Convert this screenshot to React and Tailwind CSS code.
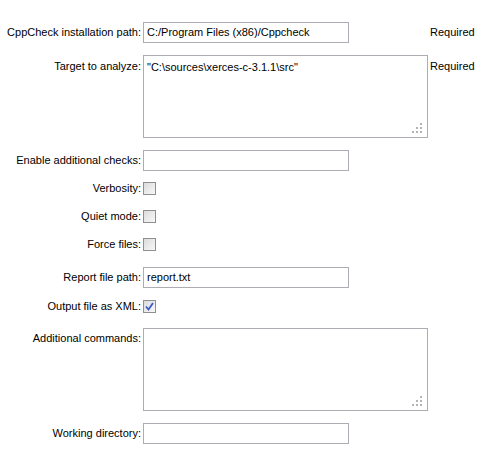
import React from "react";

/* ===================== Small parts ===================== */
function Grip() {
  // resize grip drawn in the textarea corner
  const dots = [
    [8, 0],
    [4, 4],
    [8, 4],
    [0, 8],
    [4, 8],
    [8, 8],
  ];
  return (
    <svg
      className="absolute right-[5px] bottom-[4px]"
      width="10"
      height="10"
      viewBox="0 0 10 10"
    >
      {dots.map(([x, y], i) => (
        <rect key={i} x={x} y={y} width="2" height="2" fill="#b4b4b4" />
      ))}
    </svg>
  );
}

function TextBox({ value = "" }) {
  return (
    <div className="w-[206px] h-[21px] border border-[#abadb3] bg-white px-[3px] flex items-center text-[11px] leading-none text-black">
      {value}
    </div>
  );
}

function TextArea({ value = "" }) {
  return (
    <div className="relative w-[285px] h-[83px] border border-[#abadb3] bg-white px-[3px] pt-[5px] text-[11px] leading-[13px] text-black">
      {value}
      <Grip />
    </div>
  );
}

function CheckBox({ checked }) {
  return (
    <div className="w-[13px] h-[13px] border border-[#8e8f8f] bg-gradient-to-br from-[#dcdcdc] to-[#f8f8f8] flex items-center justify-center">
      {checked && (
        <svg width="9" height="9" viewBox="0 0 9 9">
          <path
            d="M1 4.5 L3.5 7.5 L8 1"
            fill="none"
            stroke="#3a5cc6"
            strokeWidth="1.8"
          />
        </svg>
      )}
    </div>
  );
}

function Row({ label, children, note, top, className = "" }) {
  return (
    <div className={`flex ${top ? "items-start" : "items-center"} ${className}`}>
      <div
        className={`w-[143px] shrink-0 text-right pr-[2px] ${
          top || ""
        } text-[11px] leading-[13px] text-black`}
      >
        {label}
      </div>
      <div className="w-[287px] shrink-0">{children}</div>
      {note && (
        <div className={`text-[11px] leading-[13px] text-black ${top || ""}`}>
          {note}
        </div>
      )}
    </div>
  );
}

/* ===================== Component ===================== */
export default function App() {
  return (
    <div
      className="w-[481px] h-[463px] bg-white pt-[22px]"
      style={{ fontFamily: '"Liberation Sans", Arial, sans-serif' }}
    >
      <Row label="CppCheck installation path:" note="Required">
        <TextBox value="C:/Program Files (x86)/Cppcheck" />
      </Row>

      <Row
        label="Target to analyze:"
        note="Required"
        top="pt-[5px]"
        className="mt-[12px]"
      >
        <TextArea value={'"C:\\sources\\xerces-c-3.1.1\\src"'} />
      </Row>

      <Row label="Enable additional checks:" className="mt-[12px]">
        <TextBox />
      </Row>

      <Row label="Verbosity:" className="mt-[11px]">
        <CheckBox />
      </Row>

      <Row label="Quiet mode:" className="mt-[15px]">
        <CheckBox />
      </Row>

      <Row label="Force files:" className="mt-[15px]">
        <CheckBox />
      </Row>

      <Row label="Report file path:" className="mt-[16px]">
        <TextBox value="report.txt" />
      </Row>

      <Row label="Output file as XML:" className="mt-[12px]">
        <CheckBox checked />
      </Row>

      <Row label="Additional commands:" top="pt-[4px]" className="mt-[15px]">
        <TextArea />
      </Row>

      <Row label="Working directory:" className="mt-[12px]">
        <TextBox />
      </Row>
    </div>
  );
}
